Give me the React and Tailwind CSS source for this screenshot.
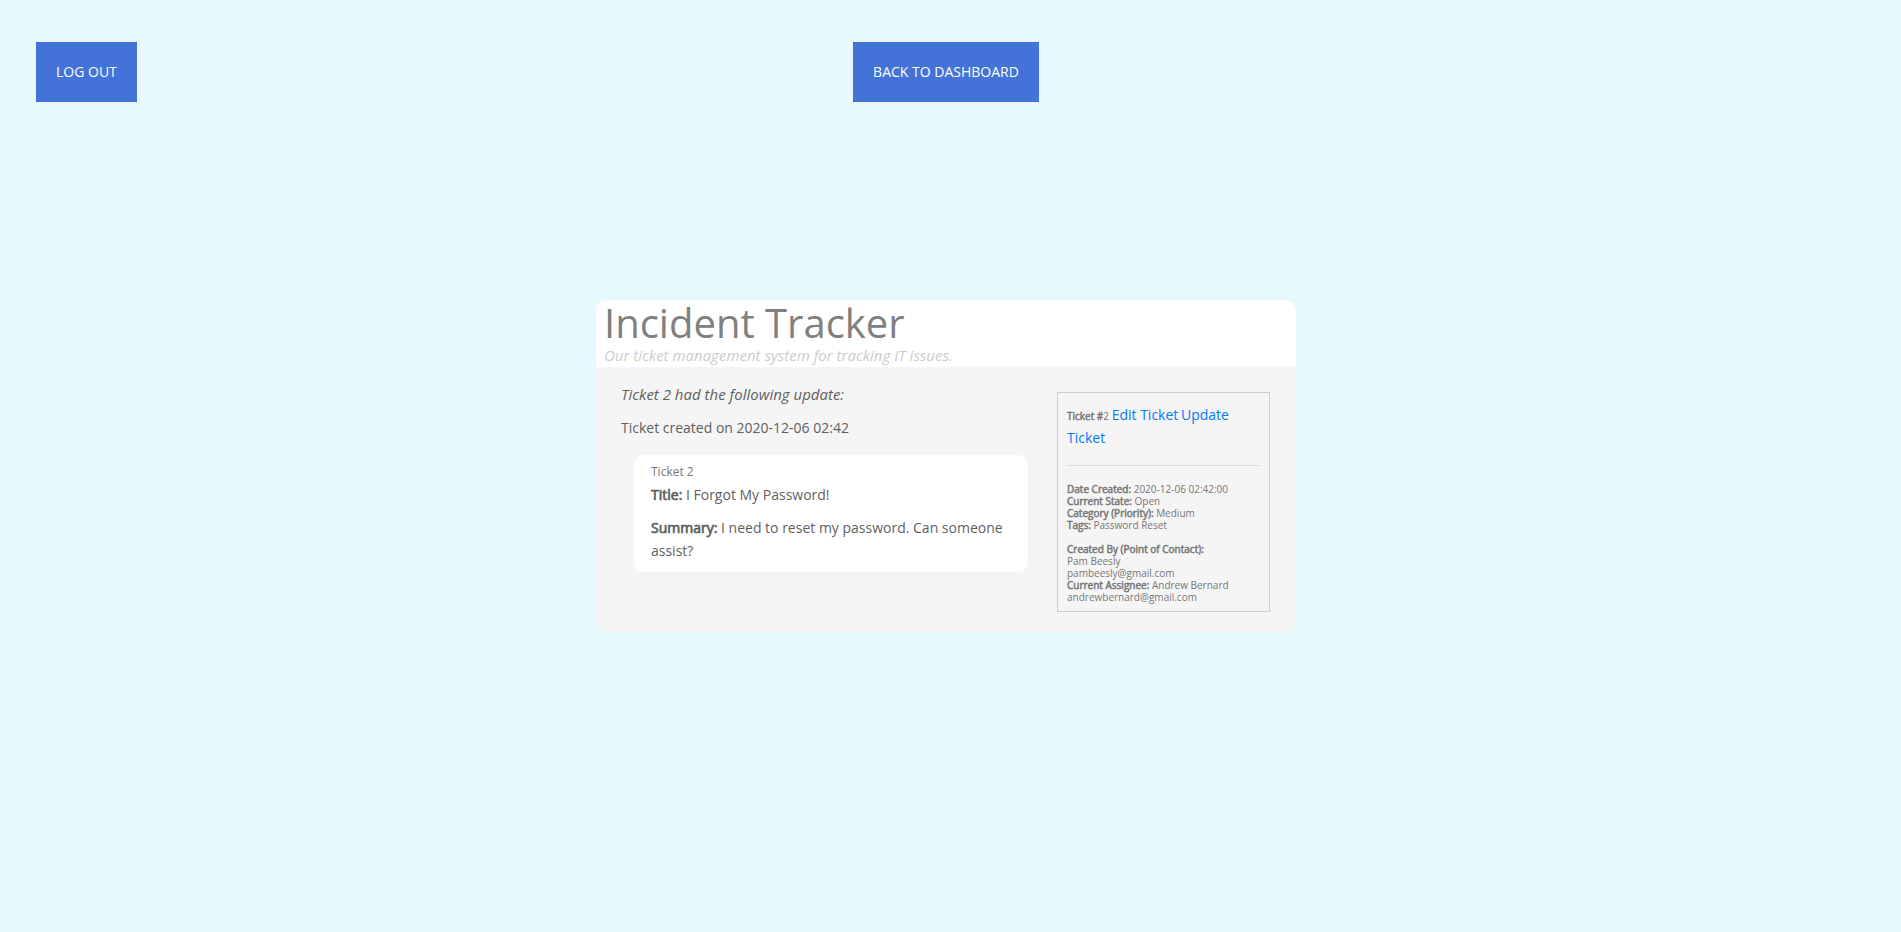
import React from 'react';

function Label({ children }) {
  return <span className="[-webkit-text-stroke:0.05em_currentColor]">{children}</span>;
}

function NavButton({ children }) {
  return (
    <button type="button" className="h-15 bg-[#4372d9] px-5 text-sm text-white">
      {children}
    </button>
  );
}

function TicketSummary() {
  return (
    <section className="flex-1 text-[#5f5f5f]">
      <p className="mb-2.5 text-[15px] italic">Ticket 2 had the following update:</p>
      <p>Ticket created on 2020-12-06 02:42</p>
      <article className="mt-4 ml-[13px] rounded-[10px] bg-white px-[17px] pt-2 pb-2.5">
        <h2 className="text-xs leading-[18px] text-[#777777]">Ticket 2</h2>
        <p className="mt-0.5 mb-2.5">
          <Label>Title:</Label> I Forgot My Password!
        </p>
        <p>
          <Label>Summary:</Label> I need to reset my password. Can someone assist?
        </p>
      </article>
    </section>
  );
}

function TicketDetails() {
  return (
    <aside className="mt-[9px] w-[213px] border border-[#cccccc] px-[9px] pt-3 pb-2 text-[10px] leading-3 text-[#777777]">
      <div className="leading-[23px]">
        <span>
          <Label>Ticket #</Label>2
        </span>{' '}
        <a href="#edit" className="text-[14px] leading-none text-[#007bff]">Edit Ticket</a>{' '}
        <a href="#update" className="text-[14px] leading-none text-[#007bff]">Update Ticket</a>
      </div>
      <hr className="mt-3.5 mb-[17px] border-[#dadada]" />
      <p><Label>Date Created:</Label> 2020-12-06 02:42:00</p>
      <p><Label>Current State:</Label> Open</p>
      <p><Label>Category (Priority):</Label> Medium</p>
      <p><Label>Tags:</Label> Password Reset</p>
      <p className="mt-3"><Label>Created By (Point of Contact):</Label></p>
      <p>Pam Beesly</p>
      <p>pambeesly@gmail.com</p>
      <p><Label>Current Assignee:</Label> Andrew Bernard</p>
      <p>andrewbernard@gmail.com</p>
    </aside>
  );
}

export default function App() {
  return (
    <div className="min-h-screen bg-[#e8faff] pr-[9px] font-['Open_Sans',sans-serif] text-sm leading-[23px]">
      <nav className="grid grid-cols-[1fr_auto_1fr] pt-[42px]">
        <div className="pl-9">
          <NavButton>LOG OUT</NavButton>
        </div>
        <NavButton>BACK TO DASHBOARD</NavButton>
      </nav>
      <main className="mx-auto mt-[198px] max-w-[700px] rounded-[10px] bg-[#f5f5f5]">
        <header className="rounded-t-[10px] bg-white px-2 pb-[3px]">
          <h1 className="text-[40px] leading-[46px] text-[#808080]">Incident Tracker</h1>
          <p className="text-[15px] leading-[18px] text-[#cccccc] italic">
            Our ticket management system for tracking IT issues.
          </p>
        </header>
        <div className="flex items-start gap-[29px] pt-4 pr-[26px] pb-5 pl-[25px]">
          <TicketSummary />
          <TicketDetails />
        </div>
      </main>
    </div>
  );
}
